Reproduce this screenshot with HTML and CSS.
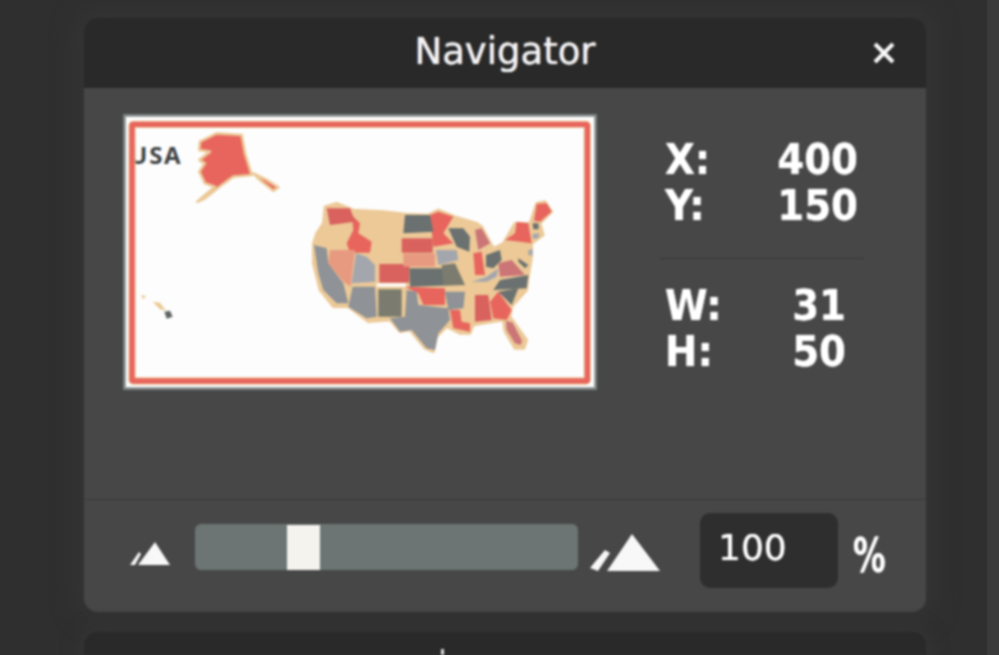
FILE: index.html
```html
<!DOCTYPE html>
<html lang="en">
<head>
  <meta charset="UTF-8">
  <title>Navigator</title>
  <link rel="stylesheet" href="styles.css">
</head>
<body>
  <div class="panel">
    <div class="titlebar">
      <span></span>
      <h1>Navigator</h1>
      <svg class="close" viewBox="0 0 24 24"><path d="M3 3 21 21M21 3 3 21"/></svg>
    </div>

    <div class="main">
      <div class="thumb">
        <svg class="map" viewBox="39 42 1422 828">
          <rect x="39" y="42" width="1422" height="828" fill="#fdfdfd" stroke="#7c8483" stroke-width="16"/>
          <text class="map-label" x="58" y="192">USA</text>
          <rect x="66" y="73" width="1366" height="770" fill="none" stroke="#ecc997" stroke-width="22" rx="4"/>
          <rect x="66" y="73" width="1366" height="770" fill="none" stroke="#e8655d" stroke-width="16" rx="4"/>

          <g fill="#e8655d" stroke="#ecc997" stroke-width="8" stroke-linejoin="round">
            <path d="M270 125 320 100 395 105 405 160 425 225 370 230 335 255 285 295 262 305 285 285 315 260 285 250 268 215 285 190 268 180 300 155 268 150Z"/>
            <path d="M430 220 470 240 505 262 490 272 450 240Z"/>
          </g>
          <path fill="#ecc997" d="M92 585 108 588 100 598ZM128 605 150 608 168 632 150 628Z"/>
          <path fill="#5d6463" d="M163 635 180 632 188 650 170 656Z"/>

          <path fill="#ecc997" stroke="#ecc997" stroke-width="8" stroke-linejoin="round" d="M645 320 680 310 730 330 820 335 885 342 955 345 985 330 1035 350 1100 370 1115 380 1150 445 1180 430 1215 370 1260 370 1280 310 1305 305 1325 335 1290 370 1300 405 1265 430 1265 470 1255 530 1250 570 1205 620 1200 650 1250 720 1242 745 1215 745 1185 695 1180 660 1090 675 1080 700 1050 700 1010 680 980 710 970 755 945 745 900 690 870 695 840 660 775 665 715 620 670 620 630 570 610 490 610 430 620 400 640 370Z"/>

          <g fill="#e8655d">
            <path d="M725 345 750 370 745 400 785 425 780 458 720 458 710 430 730 390Z"/>
            <path d="M885 560 1005 565 1005 615 940 615 925 580Z"/>
            <path d="M960 345 985 335 1030 350 1000 400 1030 430 970 440Z"/>
            <path d="M1090 460 1115 455 1125 525 1095 525Z"/>
            <path d="M1140 605 1165 575 1205 630 1190 660 1150 655Z"/>
            <path d="M1020 630 1050 630 1055 665 1080 670 1080 695 1030 685Z"/>
            <path d="M1185 420 1215 400 1220 365 1255 370 1265 430 1230 425Z"/>
            <path d="M1280 312 1310 310 1325 335 1290 365 1272 362Z"/>
          </g>

          <g fill="#d9615e">
            <path d="M650 325 720 325 735 365 660 375Z"/>
            <path d="M808 492 898 492 898 548 808 548Z"/>
            <path d="M875 415 968 415 968 458 875 458Z"/>
            <path d="M1095 585 1135 585 1145 660 1095 665Z"/>
          </g>

          <g fill="#e89a80">
            <path d="M660 450 735 450 722 560 700 545 655 490Z"/>
            <path d="M880 460 975 460 975 500 880 500Z"/>
          </g>
          <path fill="#cb7577" d="M1095 390 1115 385 1140 430 1105 450ZM1165 490 1205 480 1245 525 1170 530ZM1188 662 1208 668 1236 722 1232 735 1215 730 1190 690Z"/>

          <g fill="#a4a6ae">
            <path d="M738 460 770 470 795 495 795 545 725 550Z"/>
            <path d="M978 450 1040 450 1045 480 985 495Z"/>
            <path d="M1085 545 1130 530 1165 505 1160 530 1130 545Z"/>
            <path d="M1268 402 1288 400 1285 415 1268 416Z"/>
            <path d="M1255 450 1268 448 1268 466 1255 466Z"/>
          </g>

          <g fill="#8f9296">
            <path d="M612 435 650 445 655 490 700 550 715 610 680 610 640 570 625 520Z"/>
            <path d="M728 560 795 560 800 650 770 655 715 620Z"/>
            <path d="M890 570 920 575 925 615 1015 625 1020 660 985 700 975 750 950 745 905 690 870 695 840 655 885 650Z"/>
            <path d="M1005 575 1065 575 1060 625 1015 630Z"/>
          </g>

          <g fill="#6a7170">
            <path d="M885 345 960 345 970 395 880 400Z"/>
            <path d="M898 505 995 505 1065 555 900 560Z"/>
            <path d="M1128 465 1170 450 1175 480 1150 505 1128 500Z"/>
            <path d="M1170 540 1255 525 1250 565 1150 570Z"/>
            <path d="M1165 575 1225 565 1205 615Z"/>
            <path d="M1015 385 1060 385 1080 410 1078 455 1040 440Z"/>
            <path d="M1225 475 1255 495 1245 505 1225 485Z"/>
            <path d="M1268 370 1285 370 1286 388 1270 388Z"/>
          </g>
          <path fill="#7b7c6f" d="M805 568 875 568 875 650 805 650ZM995 495 1035 490 1065 555 1000 555Z"/>
          <path fill="#fdfdfd" d="M800 550 888 550 888 560 800 560Z"/>
        </svg>
      </div>

      <div class="stats">
        <div class="stat-group">
          <div class="stat"><span>X:</span><span>400</span></div>
          <div class="stat"><span>Y:</span><span>150</span></div>
        </div>
        <div class="stat-group size">
          <div class="stat"><span>W:</span><span>31</span></div>
          <div class="stat"><span>H:</span><span>50</span></div>
        </div>
      </div>
    </div>

    <div class="footer">
      <svg class="zoom-small" viewBox="0 0 40 25"><path d="M0 24 9 11 11 13 5 24ZM8 24 25 1 40 24Z"/></svg>
      <div class="slider"><div class="handle"></div></div>
      <svg class="zoom-large" viewBox="0 0 70 38"><path d="M0 34 15 16 20 19 8 37ZM17 37 42 0 70 37Z"/></svg>
      <input class="zoom-value" type="text" value="100">
      <span class="percent">%</span>
    </div>
  </div>

  <div class="panel-next"><span class="next-mark"></span></div>
</body>
</html>
```

FILE: styles.css
```css
* {
  box-sizing: border-box;
}

html,
body {
  height: 655px;
  margin: 0;
  overflow: hidden;
}

body {
  padding: 18px 73px 0 84px;
  background: linear-gradient(to right, #2f2f2f 987px, #3a3a3a 987px);
  font-family: "DejaVu Sans", sans-serif;
  color: #ffffff;
}

.panel {
  display: flex;
  flex-direction: column;
  height: 594px;
  background: #474747;
  border-radius: 14px;
  box-shadow: 0 0 22px 10px #343434;
  overflow: hidden;
  filter: blur(0.8px);
}

.titlebar {
  display: grid;
  grid-template-columns: 1fr auto 1fr;
  align-items: center;
  height: 70px;
  padding-bottom: 4px;
  background: #292929;
}

h1 {
  margin: 0;
  font-size: 37px;
  font-weight: normal;
  color: #f4f4f4;
  text-shadow: 0 0 1px #f4f4f4;
}

.close {
  justify-self: end;
  width: 24px;
  height: 24px;
  margin-right: 30px;
  margin-top: 4px;
  fill: none;
  stroke: #f8f8f8;
  stroke-width: 4;
}

.main {
  flex: 1;
  display: flex;
  padding: 26px 0 0 39px;
}

.thumb {
  width: 474px;
  height: 276px;
}

.map {
  display: block;
  width: 100%;
  height: 100%;
}

.map-label {
  font-family: "Open Sans", sans-serif;
  font-size: 72px;
  font-weight: bold;
  letter-spacing: 5px;
  fill: #3f4344;
}

.stats {
  width: 205px;
  margin: 22px 0 0 62px;
}

.stat-group {
  padding: 0 6px 30px;
  border-bottom: 1px solid #393939;
}

.stat-group.size {
  padding: 23px 18px 0 6px;
  border-bottom: 0;
}

.stat {
  display: flex;
  justify-content: space-between;
  font-family: "DejaVu Sans Condensed", "DejaVu Sans", sans-serif;
  font-stretch: condensed;
  font-size: 43px;
  font-weight: bold;
  line-height: 46px;
  text-shadow: 0 0 1px #ffffff;
}

.footer {
  display: flex;
  align-items: center;
  height: 113px;
  padding: 13px 0 24px 46px;
  border-top: 1px solid #393939;
}

.zoom-small {
  width: 40px;
  height: 25px;
  margin-top: 6px;
  fill: #f8f8f8;
}

.slider {
  position: relative;
  width: 383px;
  height: 46px;
  margin: 0 12px 7px 25px;
  background: #6c7573;
  border-radius: 6px;
}

.handle {
  position: absolute;
  top: 1px;
  left: 92px;
  width: 33px;
  height: 45px;
  background: #f5f3ee;
}

.zoom-large {
  width: 70px;
  height: 38px;
  margin-top: 4px;
  fill: #f8f8f8;
}

.zoom-value {
  width: 138px;
  height: 75px;
  margin-left: 40px;
  padding: 0 0 6px 18px;
  background: #2e2e2e;
  border: 0;
  border-radius: 10px;
  font-family: "DejaVu Sans", sans-serif;
  font-size: 36px;
  color: #ffffff;
  text-shadow: 0 0 1px #ffffff;
}

.percent {
  display: inline-block;
  width: 33px;
  margin: 8px 0 0 15px;
  font-size: 48px;
  font-weight: bold;
  line-height: 50px;
  text-shadow: 0 0 1px #ffffff;
  transform: scaleX(0.68);
  transform-origin: left center;
}

.panel-next {
  position: relative;
  height: 23px;
  margin-top: 20px;
  background: #292929;
  border-radius: 14px 14px 0 0;
  box-shadow: 0 0 16px 6px #343434;
  filter: blur(0.8px);
}

.next-mark {
  position: absolute;
  top: 17px;
  left: 357px;
  width: 3px;
  height: 6px;
  background: #dddddd;
}
```
